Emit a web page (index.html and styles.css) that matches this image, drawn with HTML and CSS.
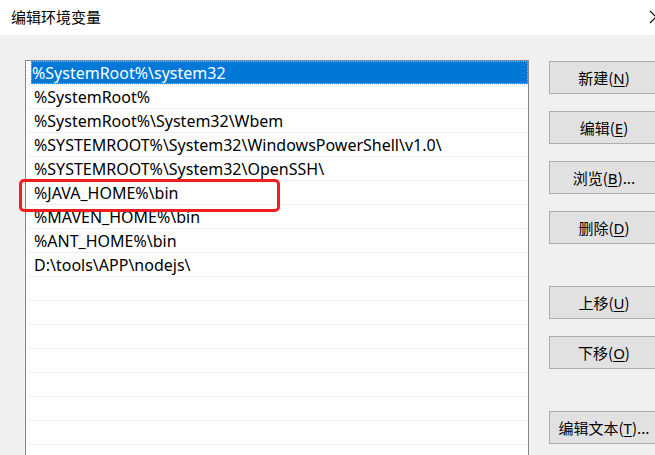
FILE: index.html
```html
<!DOCTYPE html>
<html lang="zh-CN">
<head>
<meta charset="utf-8">
<title>编辑环境变量</title>
<link rel="stylesheet" href="styles.css">
</head>
<body>
<div class="window">
  <div class="titlebar">
    <span class="title">编辑环境变量</span>
    <svg class="close" width="14" height="14" viewBox="0 0 14 14"><path d="M1 1 L13 13 M13 1 L1 13" stroke="#000" stroke-width="1.1" fill="none"/></svg>
  </div>
  <div class="content">
    <div class="listwrap">
      <div class="list">
        <div class="row selected"><span>%SystemRoot%\system32</span></div>
        <div class="row"><span>%SystemRoot%</span></div>
        <div class="row"><span>%SystemRoot%\System32\Wbem</span></div>
        <div class="row"><span>%SYSTEMROOT%\System32\WindowsPowerShell\v1.0\</span></div>
        <div class="row"><span>%SYSTEMROOT%\System32\OpenSSH\</span></div>
        <div class="row"><span>%JAVA_HOME%\bin</span></div>
        <div class="row"><span>%MAVEN_HOME%\bin</span></div>
        <div class="row"><span>%ANT_HOME%\bin</span></div>
        <div class="row"><span>D:\tools\APP\nodejs\</span></div>
        <div class="row"></div>
        <div class="row"></div>
        <div class="row"></div>
        <div class="row"></div>
        <div class="row"></div>
        <div class="row"></div>
        <div class="row"></div>
        <div class="row"></div>
      </div>
      <div class="highlight"></div>
    </div>
    <div class="buttons">
      <div class="btn">新建(<u>N</u>)</div>
      <div class="btn">编辑(<u>E</u>)</div>
      <div class="btn">浏览(<u>B</u>)...</div>
      <div class="btn">删除(<u>D</u>)</div>
      <div class="btn group">上移(<u>U</u>)</div>
      <div class="btn">下移(<u>O</u>)</div>
      <div class="btn group">编辑文本(<u>T</u>)...</div>
    </div>
  </div>
</div>
</body>
</html>
```

FILE: styles.css
```css
html, body {
  margin: 0;
  padding: 0;
  width: 655px;
  height: 455px;
  overflow: hidden;
  background: #f0f0f0;
}
.window {
  width: 655px;
  height: 455px;
  display: flex;
  flex-direction: column;
  font-family: "Noto Sans", "Noto Sans CJK SC", sans-serif;
  color: #000;
}
.titlebar {
  height: 35px;
  flex: none;
  background: #fff;
  display: flex;
  align-items: center;
  justify-content: space-between;
  padding-left: 11px;
  overflow: hidden;
}
.title {
  font-family: "Noto Sans CJK SC", sans-serif;
  font-size: 15px;
  line-height: 20px;
  margin-top: -2px;
}
.close {
  margin-right: -8px;
  margin-top: -2px;
  flex: none;
}
.content {
  flex: 1;
  display: flex;
  align-items: flex-start;
  padding: 25px 0 0 25px;
  gap: 20px;
  overflow: hidden;
}
.listwrap {
  position: relative;
  flex: none;
}
.list {
  width: 501px;
  height: 420px;
  border: 1px solid #828790;
  background: #fff;
  padding: 0 0 0 1px;
  box-sizing: content-box;
}
.row {
  height: 22px;
  padding-top: 1px;
  border-top: 1px solid #efefef;
  margin-left: 1px;
  font-size: 16px;
  line-height: 23px;
  padding-left: 6px;
  white-space: nowrap;
  overflow: hidden;
}
.row.selected {
  border-top: none;
  height: 21px;
  line-height: 22px;
  margin-left: 4px;
  padding-left: 1px;
  background: #0078d7;
  color: #fff;
  outline: 1px dotted #f7a24a;
  outline-offset: -1px;
  border-bottom: 1px solid #0078d7;
}
.highlight {
  position: absolute;
  left: -6px;
  top: 119px;
  width: 255px;
  height: 27px;
  border: 3px solid #f01e1e;
  border-radius: 5px;
}
.buttons {
  flex: none;
  display: flex;
  flex-direction: column;
  gap: 17px;
  margin-top: 1px;
}
.btn {
  width: 108px;
  height: 31px;
  border: 1px solid #adadad;
  background: #e1e1e1;
  font-family: "Noto Sans CJK SC", sans-serif;
  font-size: 15px;
  line-height: 31px;
  text-align: center;
  white-space: nowrap;
}
.btn u {
  font-family: "Noto Sans", sans-serif;
  text-underline-offset: 2px;
}
.btn.group {
  margin-top: 25px;
}
```
